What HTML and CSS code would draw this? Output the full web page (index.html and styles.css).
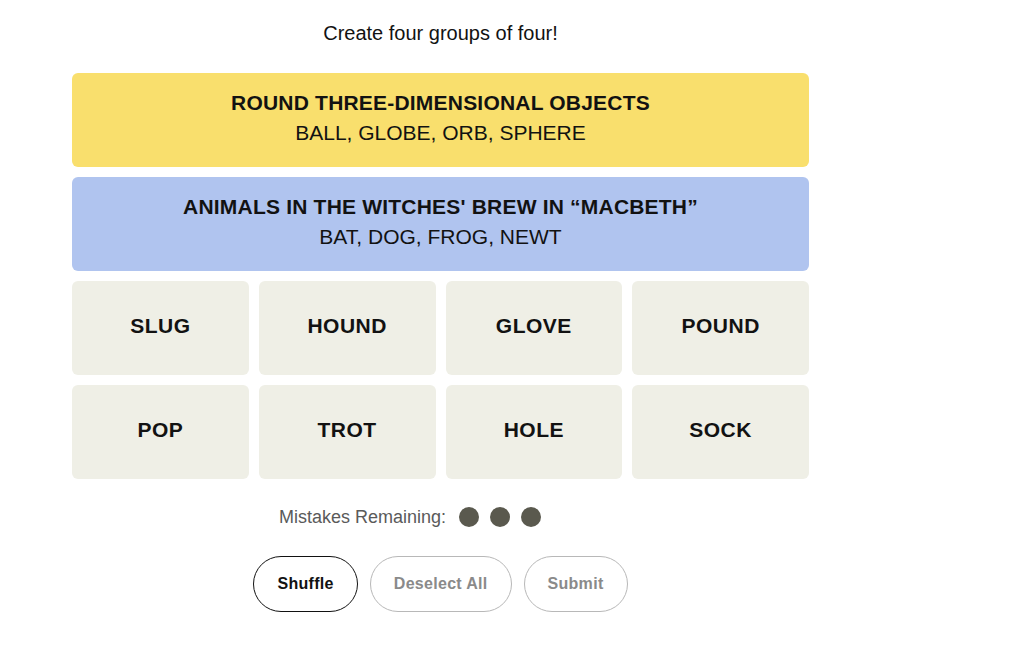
FILE: index.html
```html
<!DOCTYPE html>
<html>
<head>
<meta charset="utf-8">
<title>Connections</title>
<link rel="stylesheet" href="styles.css">
</head>
<body>

<main class="game">
	<p class="prompt">Create four groups of four!</p>

	<section class="board">
		<div class="solved yellow">
			<h3>ROUND THREE-DIMENSIONAL OBJECTS</h3>
			<p>BALL, GLOBE, ORB, SPHERE</p>
		</div>
		<div class="solved blue">
			<h3>ANIMALS IN THE WITCHES' BREW IN “MACBETH”</h3>
			<p>BAT, DOG, FROG, NEWT</p>
		</div>
		<div class="tiles">
			<div class="tile">SLUG</div>
			<div class="tile">HOUND</div>
			<div class="tile">GLOVE</div>
			<div class="tile">POUND</div>
			<div class="tile">POP</div>
			<div class="tile">TROT</div>
			<div class="tile">HOLE</div>
			<div class="tile">SOCK</div>
		</div>
	</section>

	<div class="mistakes">
		Mistakes Remaining:
		<span class="dots"><i></i><i></i><i></i></span>
	</div>

	<div class="controls">
		<button class="btn active">Shuffle</button>
		<button class="btn">Deselect All</button>
		<button class="btn">Submit</button>
	</div>
</main>

</body>
</html>
```

FILE: styles.css
```css
body {
	margin: 0;
	background: #fff;
	color: #121212;
	font-family: "Liberation Sans", Arial, sans-serif;
}

.game {
	width: 737px;
	margin-left: 72px;
}

.prompt {
	margin: 0;
	padding: 21px 0 0;
	height: 52px;
	line-height: 24px;
	font-size: 20px;
	text-align: center;
}

.board {
	display: flex;
	flex-direction: column;
	gap: 10px;
}

.solved {
	height: 94px;
	padding-bottom: 4px;
	box-sizing: border-box;
	border-radius: 6px;
	display: flex;
	flex-direction: column;
	justify-content: center;
	align-items: center;
	text-align: center;
}

	.solved h3 {
		margin: 0;
		font-size: 21px;
		line-height: 30px;
		font-weight: bold;
		letter-spacing: 0.2px;
	}

	.solved p {
		margin: 0;
		font-size: 21px;
		line-height: 30px;
	}

.yellow {
	background: #f9df6d;
}

.blue {
	background: #b0c4ef;
}

.tiles {
	display: grid;
	grid-template-columns: repeat(4, 1fr);
	grid-auto-rows: 94px;
	gap: 10px;
}

.tile {
	background: #efefe6;
	border-radius: 6px;
	padding-bottom: 4px;
	display: flex;
	align-items: center;
	justify-content: center;
	font-size: 21px;
	font-weight: bold;
	letter-spacing: 0.5px;
}

.mistakes {
	margin-top: 26px;
	padding-right: 61px;
	height: 24px;
	display: flex;
	align-items: center;
	justify-content: center;
	gap: 13px;
	font-size: 18px;
	color: #5a5a5a;
}

	.dots {
		display: flex;
		gap: 11px;
	}

	.dots i {
		width: 20px;
		height: 20px;
		border-radius: 50%;
		background: #5a594e;
	}

.controls {
	margin-top: 27px;
	display: flex;
	justify-content: center;
	gap: 12px;
}

.btn {
	height: 56px;
	padding: 0 23px;
	border: 1px solid #b8b8b8;
	border-radius: 28px;
	background: #fff;
	color: #8a8a8a;
	font-family: inherit;
	font-size: 16px;
	font-weight: bold;
	letter-spacing: 0.3px;
}

.btn.active {
	border-color: #121212;
	color: #121212;
}
```
